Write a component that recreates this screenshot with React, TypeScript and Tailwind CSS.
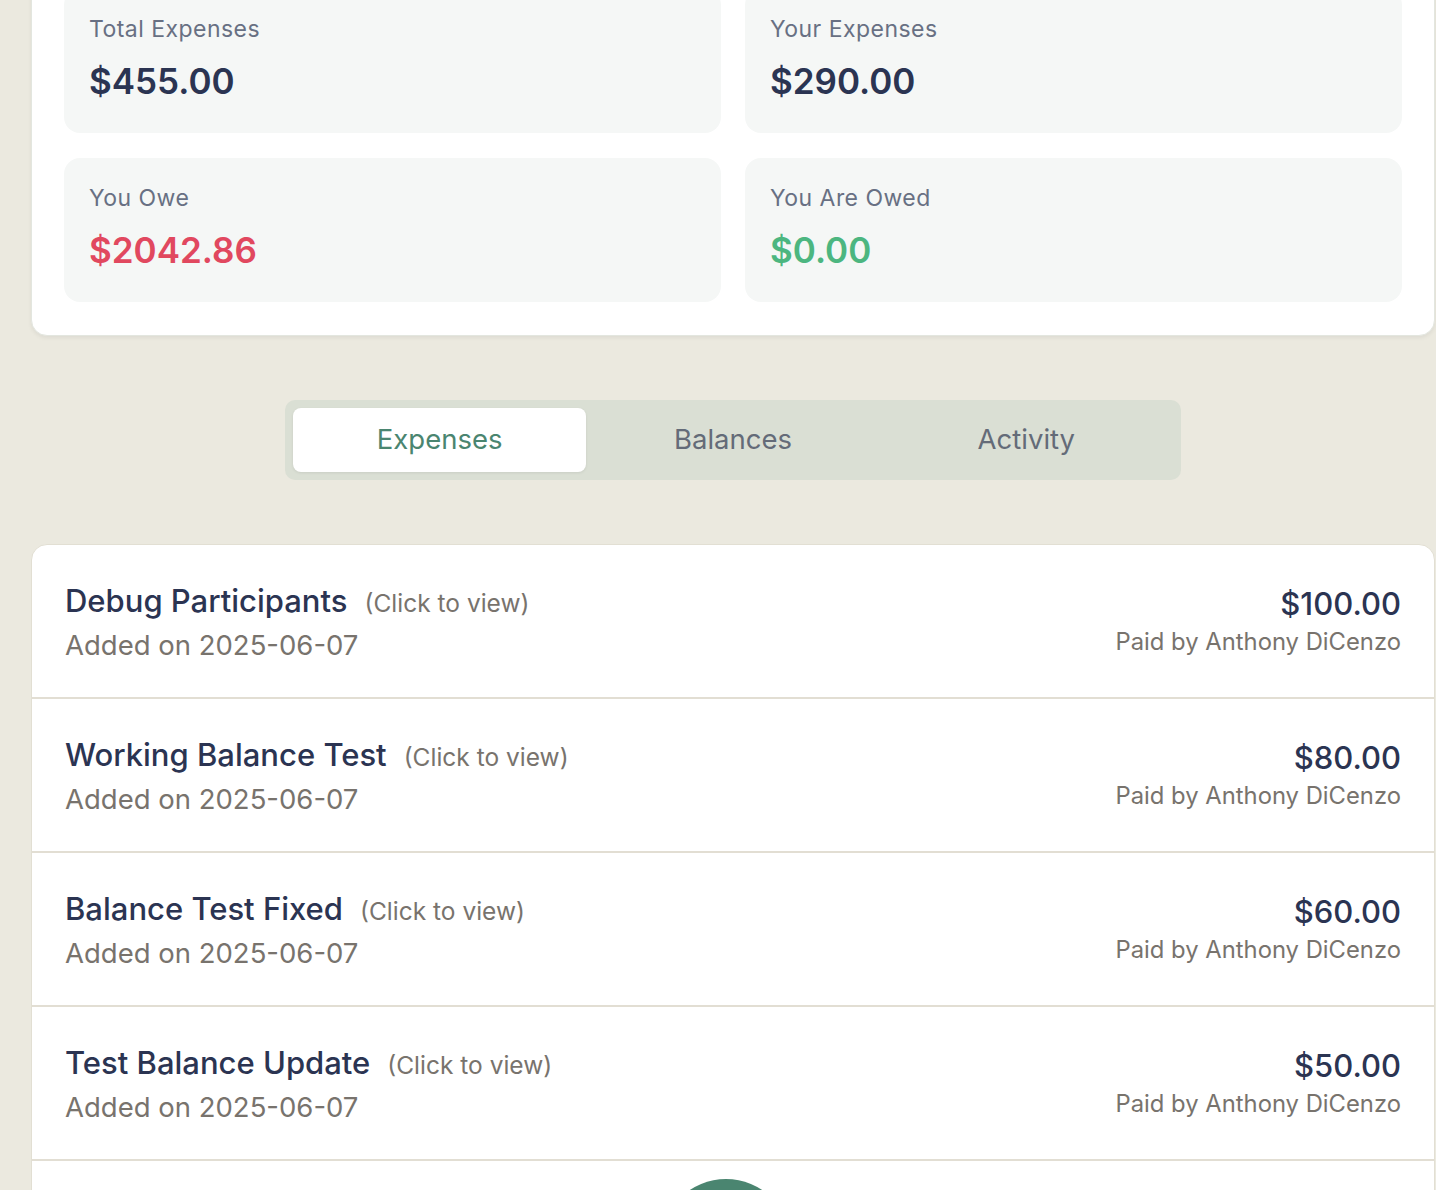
import { useState } from "react";

type Expense = {
  title: string;
  date: string;
  amount: string;
  payer: string;
};

const expenses: Expense[] = [
  { title: "Debug Participants", date: "2025-06-07", amount: "$100.00", payer: "Anthony DiCenzo" },
  { title: "Working Balance Test", date: "2025-06-07", amount: "$80.00", payer: "Anthony DiCenzo" },
  { title: "Balance Test Fixed", date: "2025-06-07", amount: "$60.00", payer: "Anthony DiCenzo" },
  { title: "Test Balance Update", date: "2025-06-07", amount: "$50.00", payer: "Anthony DiCenzo" },
];

const StatBox = ({ label, value, color }: { label: string; value: string; color: string }) => (
  <div className="bg-[#f5f7f6] rounded-[16px] px-[25px] pt-[24px] pb-[28px]">
    <div className="text-[23px] tracking-[0.02em] leading-[32px] text-[#687083]">{label}</div>
    <div className={`mt-[12px] text-[35px] leading-[48px] font-semibold ${color}`}>{value}</div>
  </div>
);

const App = () => {
  const [tab, setTab] = useState("Expenses");
  const tabs = ["Expenses", "Balances", "Activity"];

  return (
    <div
      className="w-full h-[1190px] overflow-hidden bg-[#ebe9df] pl-[31px] pr-[1px]"
      style={{ fontFamily: "Inter, 'Noto Sans', sans-serif" }}
    >
      <div className="-mt-[44px] bg-white rounded-[16px] border border-[#e3e6df] shadow-[0_2px_4px_rgba(0,0,0,0.06)] p-[32px] pb-[33px]">
        <div className="grid grid-cols-2 gap-x-[24px] gap-y-[25px]">
          <StatBox label="Total Expenses" value="$455.00" color="text-[#2b3452]" />
          <StatBox label="Your Expenses" value="$290.00" color="text-[#2b3452]" />
          <StatBox label="You Owe" value="$2042.86" color="text-[#e1485f]" />
          <StatBox label="You Are Owed" value="$0.00" color="text-[#4cb680]" />
        </div>
      </div>

      <div className="mt-[64px] flex justify-center">
        <div className="w-[896px] h-[80px] bg-[#dadfd4] rounded-[10px] p-[8px] grid grid-cols-3">
          {tabs.map((t) => (
            <button
              key={t}
              onClick={() => setTab(t)}
              className={`rounded-[8px] text-[27.5px] ${
                tab === t
                  ? "bg-white text-[#4a8570] shadow-[0_1px_3px_rgba(0,0,0,0.08)]"
                  : "text-[#646b78]"
              }`}
            >
              {t}
            </button>
          ))}
        </div>
      </div>

      <div className="mt-[64px] bg-white rounded-t-[16px] border border-[#e2dfd3]">
        {expenses.map((e) => (
          <div
            key={e.title}
            className="h-[154px] border-b-2 border-[#e2ded3] px-[33px] flex items-center justify-between"
          >
            <div className="pt-[2px]">
              <div className="flex items-baseline">
                <span className="text-[31px] leading-[40px] font-medium text-[#2b3452]">{e.title}</span>
                <span className="ml-[17px] text-[24.5px] text-[#78736d]">(Click to view)</span>
              </div>
              <div className="mt-[6px] text-[27.5px] leading-[36px] text-[#78736d]">Added on {e.date}</div>
            </div>
            <div className="text-right">
              <div className="text-[31px] leading-[40px] font-medium text-[#2b3452]">{e.amount}</div>
              <div className="mt-[2px] text-[23.8px] leading-[32px] text-[#78736d]">Paid by {e.payer}</div>
            </div>
          </div>
        ))}
        <div className="flex justify-center pt-[18px] pr-[14px]">
          <div className="w-[130px] h-[130px] rounded-full bg-[#4a8570]" />
        </div>
      </div>
    </div>
  );
};

export default App;
